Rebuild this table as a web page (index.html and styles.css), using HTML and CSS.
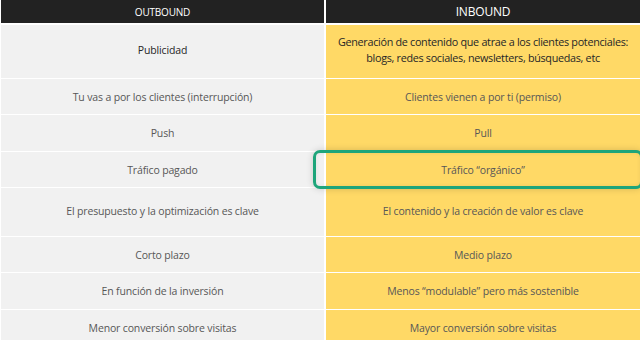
FILE: index.html
```html
<!DOCTYPE html>
<html lang="es">
<head>
    <meta charset="UTF-8">
    <meta name="viewport" content="width=device-width, initial-scale=1.0">
    <title>Outbound vs Inbound</title>
    <link rel="stylesheet" href="styles.css">
</head>
<body>

    <div class="compare">
        <div class="grid">
            <div class="head">OUTBOUND</div>
            <div class="head head-in">INBOUND</div>

            <div class="cell out strong r-big">Publicidad</div>
            <div class="cell in strong r-big wide">Generación de contenido que atrae a los clientes potenciales:<br>blogs, redes sociales, newsletters, búsquedas, etc</div>

            <div class="cell out">Tu vas a por los clientes (interrupción)</div>
            <div class="cell in">Clientes vienen a por ti (permiso)</div>

            <div class="cell out r-tall">Push</div>
            <div class="cell in r-tall">Pull</div>

            <div class="cell out">Tráfico pagado</div>
            <div class="cell in">Tráfico “orgánico”</div>

            <div class="cell out r-mid">El presupuesto y la optimización es clave</div>
            <div class="cell in r-mid">El contenido y la creación de valor es clave</div>

            <div class="cell out">Corto plazo</div>
            <div class="cell in">Medio plazo</div>

            <div class="cell out r-tall">En función de la inversión</div>
            <div class="cell in r-tall">Menos “modulable” pero más sostenible</div>

            <div class="cell out">Menor conversión sobre visitas</div>
            <div class="cell in">Mayor conversión sobre visitas</div>
        </div>

        <!-- resalta la fila del tráfico orgánico -->
        <div class="highlight"></div>
    </div>

</body>
</html>
```

FILE: styles.css
```css
:root {
    --head-bg: #222222;
    --out-bg: #f1f1f1;
    --in-bg: #ffd966;
    --text-color: #575757;
    --strong-color: #262626;
    --accent: #1ea57b;
    --font-family: "Open Sans", "Liberation Sans", sans-serif;
}

* {
    margin: 0;
    padding: 0;
    box-sizing: border-box;
}

body {
    font-family: var(--font-family);
    background: #ffffff;
    color: var(--text-color);
    width: 640px;
    height: 340px;
    overflow: hidden;
}

.compare {
    position: relative;
    padding-left: 1px;
}

/* tabla comparativa: dos columnas */
.grid {
    display: grid;
    grid-template-columns: 323px 314px;
    grid-template-rows: 24px 53px 35px 36px 35px 48px 35px 36px 35px;
    column-gap: 2px;
    row-gap: 1px;
}

.head {
    background: var(--head-bg);
    color: #ffffff;
    font-size: 10px;
    letter-spacing: -0.2px;
    display: flex;
    align-items: center;
    justify-content: center;
    margin-bottom: 1px;
}

.head-in {
    font-size: 12px;
}

.cell {
    display: flex;
    align-items: center;
    justify-content: center;
    text-align: center;
    font-size: 10.5px;
    line-height: 16px;
    letter-spacing: -0.15px;
    padding: 0 8px;
}

.out {
    background: var(--out-bg);
}

.in {
    background: var(--in-bg);
}

.strong {
    color: var(--strong-color);
    font-size: 10.5px;
}

.wide {
    white-space: nowrap;
    padding: 0;
    font-size: 10.8px;
    letter-spacing: -0.3px;
}

.r-big {
    padding-bottom: 3px;
}

.r-mid {
    padding-bottom: 3px;
}

/* recuadro verde sobre la fila destacada */
.highlight {
    position: absolute;
    left: 313px;
    top: 150px;
    width: 330px;
    height: 39px;
    border: 3px solid var(--accent);
    border-radius: 7px;
    box-shadow: 0 0 7px rgba(0, 0, 0, 0.16), inset 0 0 4px rgba(0, 0, 0, 0.07);
}
```
